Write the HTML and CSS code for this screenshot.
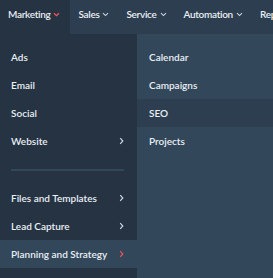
FILE: index.html
```html
<!DOCTYPE html>
<html>
<head>
<meta charset="utf-8">
<link rel="stylesheet" href="styles.css">
</head>
<body>
<nav class="nav">
  <div class="tab active">Marketing <svg class="caret" width="7" height="5" viewBox="0 0 7 5"><path d="M1 1.2 L3.5 3.6 L6 1.2" fill="none" stroke="#f2545b" stroke-width="1.3"/></svg></div>
  <div class="tab">Sales <svg class="caret" width="7" height="5" viewBox="0 0 7 5"><path d="M1 1.2 L3.5 3.6 L6 1.2" fill="none" stroke="#cbd6e2" stroke-width="1.1"/></svg></div>
  <div class="tab">Service <svg class="caret" width="7" height="5" viewBox="0 0 7 5"><path d="M1 1.2 L3.5 3.6 L6 1.2" fill="none" stroke="#cbd6e2" stroke-width="1.1"/></svg></div>
  <div class="tab">Automation <svg class="caret" width="7" height="5" viewBox="0 0 7 5"><path d="M1 1.2 L3.5 3.6 L6 1.2" fill="none" stroke="#cbd6e2" stroke-width="1.1"/></svg></div>
  <div class="tab">Reports</div>
</nav>
<div class="dropdown">
  <ul class="menu">
    <li class="item">Ads</li>
    <li class="item">Email</li>
    <li class="item">Social</li>
    <li class="item">Website <svg class="chev" width="5" height="8" viewBox="0 0 5 8"><path d="M1.2 1.2 L3.8 4 L1.2 6.8" fill="none" stroke="#cbd6e2" stroke-width="1.2"/></svg></li>
    <li class="divider"></li>
    <li class="item">Files and Templates <svg class="chev" width="5" height="8" viewBox="0 0 5 8"><path d="M1.2 1.2 L3.8 4 L1.2 6.8" fill="none" stroke="#cbd6e2" stroke-width="1.2"/></svg></li>
    <li class="item">Lead Capture <svg class="chev" width="5" height="8" viewBox="0 0 5 8"><path d="M1.2 1.2 L3.8 4 L1.2 6.8" fill="none" stroke="#cbd6e2" stroke-width="1.2"/></svg></li>
    <li class="item hover">Planning and Strategy <svg class="chev" width="5" height="8" viewBox="0 0 5 8"><path d="M1.2 1.2 L3.8 4 L1.2 6.8" fill="none" stroke="#f2545b" stroke-width="1.2"/></svg></li>
  </ul>
  <ul class="submenu">
    <li class="item">Calendar</li>
    <li class="item">Campaigns</li>
    <li class="item selected">SEO</li>
    <li class="item">Projects</li>
  </ul>
</div>
</body>
</html>
```

FILE: styles.css
```css
* { box-sizing: border-box; margin: 0; padding: 0; }
html, body { height: 100%; }
body {
  background: #33475b;
  font-family: Lato, "Open Sans", sans-serif;
  font-size: 10px;
  font-weight: 600;
  color: #e9eef3;
  overflow: hidden;
}
.nav {
  display: flex;
  height: 34px;
  background: #2d3e50;
  white-space: nowrap;
  overflow: hidden;
}
.tab {
  display: flex;
  align-items: center;
  gap: 3px;
  padding: 0 9px 6px 8px;
  flex-shrink: 0;
  letter-spacing: -0.3px;
}
.tab.active { background: #253342; padding-right: 10px; }
.caret { display: block; }
.dropdown {
  display: flex;
  height: calc(100% - 34px);
}
.menu {
  list-style: none;
  width: 137px;
  background: #253342;
  padding-top: 9px;
}
.submenu {
  list-style: none;
  flex: 1;
  padding-top: 9px;
}
.item {
  display: flex;
  align-items: center;
  justify-content: space-between;
  height: 28px;
  padding: 0 13px 0 11px;
}
.submenu .item { padding-left: 12px; }
.item.hover { background: #33475b; }
.item.selected { background: #2d3e50; }
.divider {
  height: 2px;
  margin: 14px 13px 13px 11px;
  background: #33475b;
}
.chev { display: block; }
```
